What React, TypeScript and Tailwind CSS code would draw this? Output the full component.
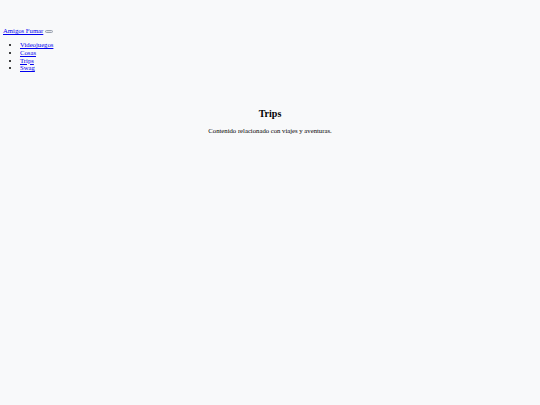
const links = ["Videojuegos", "Cosas", "Trips", "Swag"];

const App = () => {
  return (
    <div className="min-h-[405px] bg-[#f8f9fa] text-black" style={{ fontFamily: '"Liberation Serif", serif' }}>
      <nav className="pt-[27px] pl-[3px] text-[6.7px] leading-[7.7px]">
        <div className="flex items-center">
          <a href="#" className="text-[#0000ee] underline">Amigos Fumar</a>
          <button className="ml-[2px] mt-[2px] h-[3px] w-[8px] rounded-[2px] border-[0.5px] border-gray-400 bg-gray-200" />
        </div>
        <ul className="mt-[6.5px] list-disc pl-[17px]">
          {links.map((l) => (
            <li key={l}>
              <a href="#" className="text-[#0000ee] underline">{l}</a>
            </li>
          ))}
        </ul>
      </nav>
      <main className="mt-[36px] text-center">
        <h2 className="text-[10px] font-bold leading-[12px]">Trips</h2>
        <p className="mt-[7px] text-[6.7px] leading-[7.7px]">Contenido relacionado con viajes y aventuras.</p>
      </main>
    </div>
  );
};

export default App;
